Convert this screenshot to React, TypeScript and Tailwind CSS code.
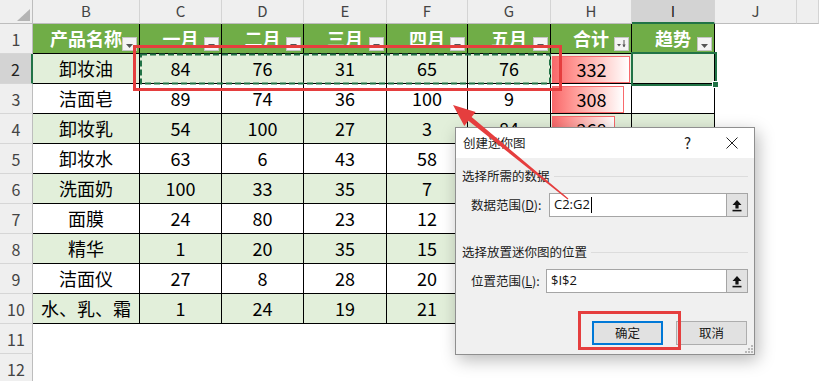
import React from "react";

const W = [
  "w-[33px]",
  "w-[107px]",
  "w-[82px]",
  "w-[82px]",
  "w-[83px]",
  "w-[81px]",
  "w-[83px]",
  "w-[81px]",
  "w-[83px]",
  "w-[82px]",
  "w-[22px]",
];

const letters = ["B", "C", "D", "E", "F", "G", "H", "I", "J", ""];

type Row = { name: string; v: number[]; total: number };
const rows: Row[] = [
  { name: "卸妆油", v: [84, 76, 31, 65, 76], total: 332 },
  { name: "洁面皂", v: [89, 74, 36, 100, 9], total: 308 },
  { name: "卸妆乳", v: [54, 100, 27, 3, 84], total: 268 },
  { name: "卸妆水", v: [63, 6, 43, 58, 57], total: 227 },
  { name: "洗面奶", v: [100, 33, 35, 7, 70], total: 245 },
  { name: "面膜", v: [24, 80, 23, 12, 50], total: 189 },
  { name: "精华", v: [1, 20, 35, 15, 40], total: 111 },
  { name: "洁面仪", v: [27, 8, 28, 20, 30], total: 113 },
  { name: "水、乳、霜", v: [1, 24, 19, 21, 18], total: 83 },
];

const heads = ["产品名称", "一月", "二月", "三月", "四月", "五月", "合计", "趋势"];

function Dropdown({ sort }: { sort?: boolean }) {
  return (
    <div className="absolute right-[2px] bottom-[2px] w-[15px] h-[14px] bg-[#f4f4f4] border border-[#c4c4c4] flex items-end justify-center pb-[2px]">
      {sort ? (
        <svg width="11" height="9" viewBox="0 0 11 9">
          <polygon points="1,5 5,5 3,7.5" fill="#555" />
          <line x1="8" y1="1" x2="8" y2="8" stroke="#555" strokeWidth="1" />
          <polygon points="6.3,5.5 9.7,5.5 8,8.3" fill="#555" />
        </svg>
      ) : (
        <svg width="7" height="4" viewBox="0 0 7 4">
          <polygon points="0,0 7,0 3.5,4" fill="#555" />
        </svg>
      )}
    </div>
  );
}

function RowHead({ n }: { n: number }) {
  const sel = n === 2;
  return (
    <div
      className={`${W[0]} shrink-0 h-full flex items-center justify-center text-[16px] border-b border-b-[#d6d6d6] ${
        sel
          ? "bg-[#d3d3d3] border-r-2 border-r-[#217346] text-[#222]"
          : "bg-[#efefef] border-r border-r-[#bdbdbd] text-[#444]"
      }`}
    >
      {n}
    </div>
  );
}

function ColHeader() {
  return (
    <div className="flex h-[24px]">
      <div className={`${W[0]} shrink-0 h-full bg-[#efefef] border-r border-b border-[#bdbdbd] relative`}>
        <svg className="absolute left-0 top-0" width="33" height="24" viewBox="0 0 33 24">
          <polygon points="30,9 30,21 17,21" fill="#b4b4b4" />
        </svg>
      </div>
      {letters.map((l, i) => (
        <div
          key={i}
          className={`${W[i + 1]} shrink-0 h-full flex items-center justify-center text-[15px] border-r border-r-[#d4d4d4] ${
            l === "I"
              ? "bg-[#d3d3d3] border-b-2 border-b-[#217346] text-[#222]"
              : "bg-[#efefef] border-b border-b-[#bdbdbd] text-[#444]"
          }`}
        >
          {l}
        </div>
      ))}
    </div>
  );
}

function HeaderRow() {
  return (
    <div className="flex h-[30px]">
      <RowHead n={1} />
      {heads.map((h, i) => (
        <div
          key={i}
          className={`${W[i + 1]} shrink-0 h-full relative flex items-center justify-center bg-[#70ad47] text-white font-bold text-[18px] border-r border-b border-black`}
        >
          {h}
          <Dropdown sort={h === "合计"} />
        </div>
      ))}
      <div className={`${W[9]} shrink-0`} />
      <div className={`${W[10]} shrink-0`} />
    </div>
  );
}

function DataRow({ r, n }: { r: Row; n: number }) {
  const band = n % 2 === 0 ? "bg-[#e2efda]" : "bg-white";
  const cell = `shrink-0 h-full flex items-center justify-center text-[18px] border-r border-b border-black ${band}`;
  // cells in G and H from row 5 down lie fully under the dialog
  const hidden = n >= 5;
  return (
    <div className="flex h-[30px]">
      <RowHead n={n} />
      <div className={`${W[1]} ${cell}`}>{r.name}</div>
      {r.v.map((v, i) => (
        <div key={i} className={`${W[i + 2]} ${cell}`}>
          {hidden && i === 4 ? "" : v}
        </div>
      ))}
      <div className={`${W[7]} shrink-0 h-full grid py-[2px] pl-[1px] text-[18px] border-r border-b border-black ${band}`}>
        <div
          className="col-start-1 row-start-1 h-full justify-self-start bg-linear-to-r from-[#f8696b] to-white border border-[#f8696b]"
          style={{ width: Math.round(r.total * 0.235) }}
        />
        <div className="col-start-1 row-start-1 self-center justify-self-center relative">{hidden ? "" : r.total}</div>
      </div>
      <div className={`${W[8]} shrink-0 h-full border-r border-b border-black ${band}`} />
      <div className={`${W[9]} shrink-0`} />
      <div className={`${W[10]} shrink-0`} />
    </div>
  );
}

function EmptyRow({ n }: { n: number }) {
  return (
    <div className="flex h-[30px]">
      <RowHead n={n} />
    </div>
  );
}

function UpIcon() {
  return (
    <svg width="10" height="13" viewBox="0 0 10 13">
      <polygon points="5,1 9.5,6 6.6,6 6.6,9.5 3.4,9.5 3.4,6 0.5,6" fill="#111" />
      <rect x="0.5" y="10.8" width="9" height="1.6" fill="#111" />
    </svg>
  );
}

function Dialog() {
  return (
    <div className="absolute left-[455px] top-[127px] w-[300px] h-[228px] border border-[#8f8f8f] bg-[#f0f0f0] shadow-[3px_5px_16px_rgba(0,0,0,0.28)] flex flex-col text-[12.5px] text-[#1a1a1a]">
      <div className="h-[30px] shrink-0 bg-white flex items-center pl-[7px]">
        <span>创建迷你图</span>
        <span className="ml-auto text-[15px] text-[#222]">?</span>
        <svg className="ml-[35px] mr-[16px]" width="12" height="12" viewBox="0 0 12 12">
          <line x1="0.5" y1="0.5" x2="11.5" y2="11.5" stroke="#222" strokeWidth="1" />
          <line x1="11.5" y1="0.5" x2="0.5" y2="11.5" stroke="#222" strokeWidth="1" />
        </svg>
      </div>
      <div className="flex flex-col px-[6px] relative flex-1">
        <div className="mt-[10px] h-[16px] flex items-center gap-[4px] leading-[16px]">
          <span>选择所需的数据</span>
          <div className="flex-1 h-px bg-[#dcdcdc]" />
        </div>
        <div className="mt-[9px] h-[24px] flex items-center">
          <span className="pl-[9px] w-[87px] shrink-0">
            数据范围(<span className="underline">D</span>):
          </span>
          <div className="flex-1 h-full flex border border-[#a5a5a5] bg-white">
            <div className="flex-1 flex items-center pl-[4px] text-[13px] font-['Open_Sans','Liberation_Sans',sans-serif] text-[#111]">
              C2:G2
              <span className="ml-[1px] w-px h-[16px] bg-black" />
            </div>
            <div className="w-[21px] h-full bg-[#e1e1e1] border-l border-[#a5a5a5] flex items-center justify-center">
              <UpIcon />
            </div>
          </div>
        </div>
        <div className="mt-[27px] h-[16px] flex items-center gap-[4px] leading-[16px]">
          <span>选择放置迷你图的位置</span>
          <div className="flex-1 h-px bg-[#dcdcdc]" />
        </div>
        <div className="mt-[9px] h-[24px] flex items-center">
          <span className="pl-[9px] w-[84px] shrink-0">
            位置范围(<span className="underline">L</span>):
          </span>
          <div className="flex-1 h-full flex border border-[#a5a5a5] bg-white">
            <div className="flex-1 flex items-center pl-[4px] text-[13px] font-['Open_Sans','Liberation_Sans',sans-serif] text-[#111]">
              $I$2
            </div>
            <div className="w-[21px] h-full bg-[#e1e1e1] border-l border-[#a5a5a5] flex items-center justify-center">
              <UpIcon />
            </div>
          </div>
        </div>
        <div className="mt-[28px] flex justify-end gap-[13px] pr-[1px]">
          <div className="w-[71px] h-[24px] border-2 border-[#0078d7] bg-[#e1e1e1] flex items-center justify-center">
            确定
          </div>
          <div className="w-[71px] h-[24px] border border-[#adadad] bg-[#e1e1e1] flex items-center justify-center">
            取消
          </div>
        </div>
        <svg className="absolute right-[1px] bottom-[1px]" width="8" height="8" viewBox="0 0 8 8">
          <rect x="6" y="0" width="2" height="2" fill="#b8b8b8" />
          <rect x="3" y="3" width="2" height="2" fill="#b8b8b8" />
          <rect x="6" y="3" width="2" height="2" fill="#b8b8b8" />
          <rect x="0" y="6" width="2" height="2" fill="#b8b8b8" />
          <rect x="3" y="6" width="2" height="2" fill="#b8b8b8" />
          <rect x="6" y="6" width="2" height="2" fill="#b8b8b8" />
        </svg>
      </div>
    </div>
  );
}

export default function App() {
  return (
    <div className="relative w-[819px] h-[381px] overflow-hidden bg-white font-['Noto_Sans_CJK_SC','Liberation_Sans',sans-serif] text-black">
      <ColHeader />
      <HeaderRow />
      {rows.map((r, i) => (
        <DataRow key={i} r={r} n={i + 2} />
      ))}
      <EmptyRow n={11} />
      <EmptyRow n={12} />

      {/* marquee around C2:G2 */}
      <svg className="absolute left-0 top-0 pointer-events-none" width="819" height="381">
        <rect x="141" y="54.5" width="409" height="29" fill="none" stroke="#217346" strokeWidth="2" strokeDasharray="6 3" />
      </svg>

      {/* selected cell I2 */}
      <div className="absolute left-[631px] top-[52px] w-[86px] h-[34px] border-2 border-[#217346] pointer-events-none" />
      <div className="absolute left-[712px] top-[81px] w-[7px] h-[7px] bg-[#217346] border border-white" />

      {/* red annotation box on table */}
      <div className="absolute left-[133px] top-[45px] w-[429px] h-[46px] border-[3px] border-[#e53e3e] pointer-events-none" />

      <Dialog />

      {/* red box around OK */}
      <div className="absolute left-[578px] top-[311px] w-[103px] h-[39px] border-[3px] border-[#e53e3e] pointer-events-none" />

      {/* arrow */}
      <svg className="absolute left-0 top-0 pointer-events-none" width="819" height="381">
        <polygon
          points="453,105 475.7,111.9 471.6,117 568.4,198.5 567.6,199.5 468.4,120.8 464.3,125.9"
          fill="#e53e3e"
        />
      </svg>
    </div>
  );
}
